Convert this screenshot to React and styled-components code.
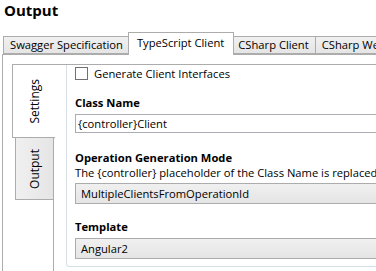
import styled, { createGlobalStyle } from 'styled-components'

const GlobalStyle = createGlobalStyle`
  html, body {
    margin: 0;
    padding: 0;
    background: #ffffff;
    overflow: hidden;
  }
  body {
    font-family: "Open Sans", "Noto Sans", sans-serif;
    font-size: 11.2px;
    color: #000000;
  }
`

const Window = styled.div`
  width: 376px;
  height: 271px;
  overflow: hidden;
  display: flex;
  flex-direction: column;
`

const Title = styled.h1`
  box-sizing: border-box;
  margin: 0;
  padding: 0 0 0 4px;
  height: 32px;
  font-size: 15px;
  font-weight: 700;
  line-height: 20px;
  flex-shrink: 0;
`

const TabStrip = styled.div`
  display: flex;
  align-items: flex-end;
  height: 22px;
  padding-left: 3px;
  position: relative;
  z-index: 2;
  white-space: nowrap;
  flex-shrink: 0;
`

const Tab = styled.div`
  box-sizing: border-box;
  flex-shrink: 0;
  height: ${p => (p.$active ? '23px' : '18px')};
  margin: ${p => (p.$active ? '0 -2px -1px -2px' : '0 0 0 -1px')};
  padding: ${p => (p.$active ? '0 9px 0 8px' : '0 6px 0 6px')};
  border: 1px solid #acacac;
  border-bottom: ${p => (p.$active ? 'none' : '1px solid #acacac')};
  background: ${p => (p.$active ? '#ffffff' : 'linear-gradient(#f0f0f0, #e5e5e5)')};
  line-height: ${p => (p.$active ? '19px' : '15px')};
  position: relative;
  z-index: ${p => (p.$active ? 2 : 1)};

  &:first-child {
    margin-left: 0;
  }
`

const OuterPanel = styled.div`
  flex: 1;
  display: flex;
  margin-left: 2px;
  padding: 9px 0 0 9px;
  border-top: 1px solid #acacac;
  border-left: 1px solid #acacac;
  min-height: 0;
`

const SideTabs = styled.div`
  display: flex;
  flex-direction: column;
  width: 43px;
  flex-shrink: 0;
  margin-right: -2px;
  position: relative;
  z-index: 1;
`

const SideTab = styled.div`
  box-sizing: border-box;
  display: flex;
  align-items: center;
  justify-content: center;
  width: ${p => (p.$active ? '43px' : '38px')};
  height: ${p => (p.$active ? '74px' : '62px')};
  margin-left: ${p => (p.$active ? '0' : '3px')};
  border: 1px solid #acacac;
  border-right: none;
  border-top: ${p => (p.$active ? '1px solid #acacac' : 'none')};
  background: ${p => (p.$active ? '#ffffff' : 'linear-gradient(90deg, #f0f0f0, #e5e5e5)')};

  span {
    writing-mode: vertical-rl;
    transform: rotate(180deg);
    font-size: 12px;
    white-space: nowrap;
  }
`

const TabContent = styled.div`
  flex: 1;
  min-width: 0;
  border-top: 1px solid #acacac;
  border-left: 1px solid #acacac;
  padding-left: 12px;
  overflow: hidden;
`

const GroupPanel = styled.div`
  box-sizing: border-box;
  height: 202px;
  margin-right: -20px;
  padding: 2px 0 0 8px;
  border: 1px solid #d5dfe5;
  border-top: none;
  border-radius: 0 0 3px 3px;
`

const CheckRow = styled.label`
  display: flex;
  align-items: center;
  gap: 6px;
  height: 13px;
  line-height: 13px;
  white-space: nowrap;
`

const CheckBox = styled.span`
  box-sizing: border-box;
  width: 13px;
  height: 13px;
  border: 1px solid #707070;
  background: #ffffff;
  flex-shrink: 0;
`

const FieldLabel = styled.div`
  margin-top: ${p => p.$top}px;
  font-weight: 700;
  line-height: 15px;
  white-space: nowrap;
`

const Description = styled.div`
  line-height: 15px;
  white-space: nowrap;
`

const TextInput = styled.div`
  box-sizing: border-box;
  height: 19px;
  margin-top: 4px;
  padding-left: 2px;
  border: 1px solid #abadb3;
  line-height: 17px;
  white-space: nowrap;
`

const ComboBox = styled.div`
  box-sizing: border-box;
  height: 21px;
  margin-top: ${p => p.$top}px;
  padding-left: 5px;
  border: 1px solid #acacac;
  background: linear-gradient(#f0f0f0, #e5e5e5);
  line-height: 19px;
  white-space: nowrap;
`

export default function App() {
  return (
    <Window>
      <GlobalStyle />
      <Title>Output</Title>
      <TabStrip>
        <Tab>Swagger Specification</Tab>
        <Tab $active>TypeScript Client</Tab>
        <Tab>CSharp Client</Tab>
        <Tab>CSharp Web API Controller</Tab>
      </TabStrip>
      <OuterPanel>
        <SideTabs>
          <SideTab $active><span>Settings</span></SideTab>
          <SideTab><span>Output</span></SideTab>
        </SideTabs>
        <TabContent>
          <GroupPanel>
            <CheckRow>
              <CheckBox />
              Generate Client Interfaces
            </CheckRow>
            <FieldLabel $top={15}>Class Name</FieldLabel>
            <TextInput>{'{controller}Client'}</TextInput>
            <FieldLabel $top={17}>Operation Generation Mode</FieldLabel>
            <Description>The {'{controller}'} placeholder of the Class Name is replaced by the operation tag</Description>
            <ComboBox $top={3}>MultipleClientsFromOperationId</ComboBox>
            <FieldLabel $top={15}>Template</FieldLabel>
            <ComboBox $top={4}>Angular2</ComboBox>
          </GroupPanel>
        </TabContent>
      </OuterPanel>
    </Window>
  )
}
